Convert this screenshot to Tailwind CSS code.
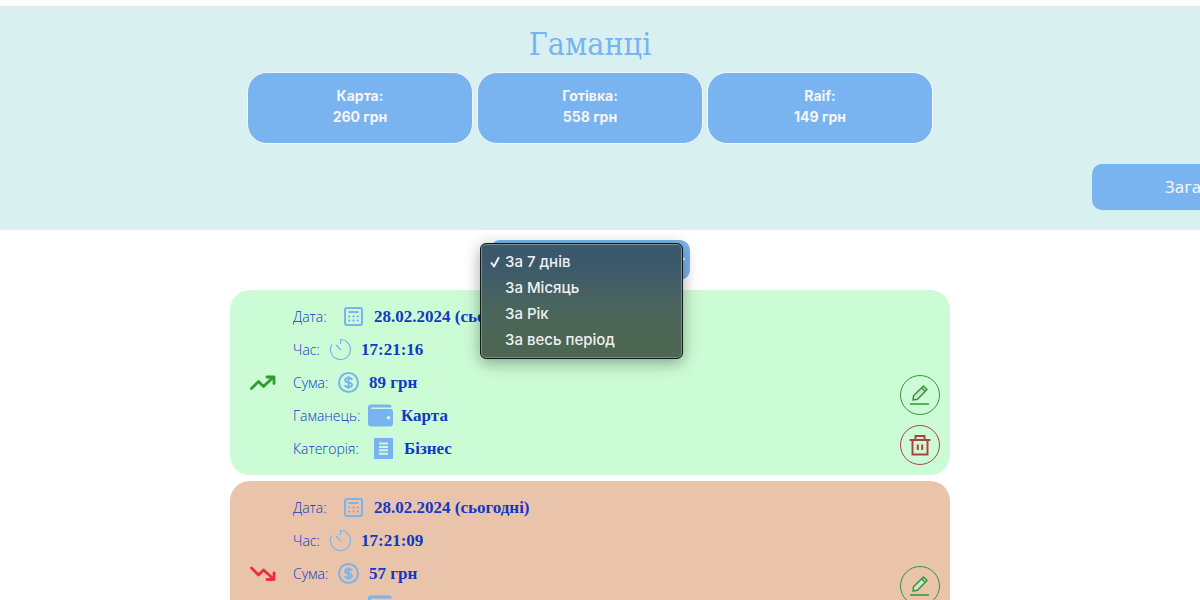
<!DOCTYPE html>
<html lang="uk">
<head>
<meta charset="utf-8">
<meta name="viewport" content="width=device-width, initial-scale=1">
<title>Гаманці</title>
<script src="https://cdn.jsdelivr.net/npm/@tailwindcss/browser@4"></script>
</head>
<body class="bg-white pt-1.5 overflow-x-hidden font-['Inter','Liberation_Sans',sans-serif]">
<svg class="hidden" aria-hidden="true">
  <symbol id="calendar" viewBox="0 0 25 25"><g fill="none" stroke="currentColor" stroke-width="2"><rect x="4" y="4" width="17" height="17" rx="2"/><path d="M7.500 8h10" stroke-width="2"/><path d="M7 12.500h2.400m1.900 0h2.400m1.900 0H18M7 16.500h2.400m1.900 0h2.400m1.900 0H18M8.200 11.300v2.400m4.300-2.400v2.400m4.300-2.400v2.400M8.200 15.300v2.400m4.300-2.400v2.400m4.300-2.400v2.400" stroke-width="1"/></g></symbol>
  <symbol id="timer" viewBox="0 0 25 25"><path fill="none" stroke="currentColor" stroke-width="1.200" d="M12.500 7V2.500A10 10 0 1 1 3.800 7.500M8 8l5 5"/></symbol>
  <symbol id="coin" viewBox="0 0 25 25"><g fill="none" stroke="currentColor" stroke-width="2"><circle cx="12.500" cy="12.500" r="9.500"/><path d="M16 9.800c-.5-1.300-1.800-1.700-3.500-1.700-2 0-3.300.7-3.300 2.100 0 3.300 6.800 1.300 6.800 4.600 0 1.500-1.500 2.200-3.500 2.200-1.900 0-3.200-.7-3.600-2.100M12.500 6.200v12.600"/></g></symbol>
  <symbol id="wallet" viewBox="0 0 25 25"><path fill="currentColor" fill-rule="evenodd" d="M3 1.500h18.500q2 0 2 2v1H4q-1-.2-1 .8T4 6h18q3 0 3 3v11.500q0 3-3 3H3q-3 0-3-3v-16q0-3 3-3ZM20.500 13a1.800 1.800 0 1 0 0 3.600 1.800 1.800 0 0 0 0-3.600Z"/></symbol>
  <symbol id="list" viewBox="0 0 25 25"><path fill="currentColor" fill-rule="evenodd" d="M3 2h19v21H3ZM8 6.500v2h9v-2Zm0 3.400v2h9v-2Zm0 3.400v2h9v-2Zm0 3.400v2h9v-2Z"/></symbol>
  <symbol id="up" viewBox="0 0 26 26"><path fill="none" stroke="currentColor" stroke-width="2.800" stroke-linecap="round" stroke-linejoin="round" d="m1.500 18.500 7-7 5 5L23.500 7M17 7h7v6.500"/></symbol>
  <symbol id="down" viewBox="0 0 26 26"><path fill="none" stroke="currentColor" stroke-width="2.800" stroke-linecap="round" stroke-linejoin="round" d="m1.500 7 7 7 5-5 10 9M17 18.500h7V12"/></symbol>
  <symbol id="edit" viewBox="0 0 24 24"><path fill="#d5e2d8" stroke="currentColor" stroke-width="1.500" stroke-linejoin="round" d="M5.500 12.800 15.500 3 19 6.500 9.500 16.200 5 17Z"/><path stroke="currentColor" stroke-width="1.500" d="M2 21h19M13.800 5l3 3"/></symbol>
  <symbol id="trash" viewBox="0 0 24 24"><path fill="none" stroke="currentColor" stroke-width="2" d="M1.500 7h21M7.500 6V3h9v3M4.500 7v14.500h15V7M9.800 11.500v5.500m4.400-5.500v5.500"/></symbol>
</svg>

<header class="bg-[#d8f0f0] pt-[18px] pb-5 overflow-hidden">
  <div class="pr-5 flex flex-col items-center">
    <h1 class="font-['DejaVu_Serif_Condensed','DejaVu_Serif',serif] text-[32px] leading-[40px] text-[#79b4f0]">Гаманці</h1>
    <div class="flex gap-1 mt-2 text-[14px] leading-[21px] font-bold text-[#f5f5f5]">
      <button class="w-[226px] h-[72px] rounded-[20px] border border-[#f5f5f5] bg-[#79b4f0] pb-1">Карта:<br>260 грн</button>
      <button class="w-[226px] h-[72px] rounded-[20px] border border-[#f5f5f5] bg-[#79b4f0] pb-1">Готівка:<br>558 грн</button>
      <button class="w-[226px] h-[72px] rounded-[20px] border border-[#f5f5f5] bg-[#79b4f0] pb-1">Raif:<br>149 грн</button>
    </div>
  </div>
  <div class="flex justify-end mt-5 -mr-[112px]">
    <button class="w-[220px] h-[46px] shrink-0 rounded-[10px] bg-[#79b4f0] pl-[73px] text-left text-[17px] text-[#f5f5f5] font-['Noto_Sans',sans-serif]">Загальна</button>
  </div>
</header>

<main class="pr-5 pt-[10px] flex flex-col items-center">
  <div class="relative w-[200px]">
    <select aria-label="Період" class="block appearance-none w-full h-10 rounded-[10px] bg-[#79b4f0] text-[#f5f5f5] px-4 text-[16px]"><option>За 7 днів</option><option>За Місяць</option><option>За Рік</option><option>За весь період</option></select>
    <svg class="absolute right-1 top-4 w-3 h-2 text-white pointer-events-none" viewBox="0 0 12 8" fill="none" stroke="currentColor" stroke-width="1.500"><path d="m1 2 5 5 5-5"/></svg>
    <ul role="listbox" aria-label="Період" class="absolute z-10 -left-[10px] top-[3px] w-[203px] h-[116px] rounded-[6px] border border-[#101818] bg-linear-to-b from-[#3b586d] from-15% via-[#4a655d] via-55% to-[#4d6653] to-85% shadow-[inset_0_0_0_1px_#7b8f8b,0_4px_16px_rgba(0,0,0,0.35)] pt-[5px] text-[15px] leading-[26px] font-medium text-[#eef1f0]">
      <li role="option" aria-selected="true" class="flex items-center"><svg class="w-[10px] h-[12px] ml-[9px] mr-[5px]" viewBox="0 0 10 12" fill="none" stroke="currentColor" stroke-width="2" stroke-linecap="round" stroke-linejoin="round"><path d="m1.500 7 2.500 3.500L8.500 2"/></svg>За 7 днів</li>
      <li role="option" aria-selected="false" class="pl-6">За Місяць</li>
      <li role="option" aria-selected="false" class="pl-6">За Рік</li>
      <li role="option" aria-selected="false" class="pl-6">За весь період</li>
    </ul>
  </div>

  <div class="w-full max-w-[720px] mt-[10px] flex flex-col gap-1.5 text-[#1039c4]">
    <article class="flex rounded-[20px] bg-[#ccfcd5] p-[10px]">
      <svg class="w-[26px] h-[26px] ml-[10px] mr-[17px] self-center text-[#339933]"><use href="#up"/></svg>
      <dl class="flex-1 text-[14px] font-['Open_Sans',sans-serif]">
        <div class="flex items-center h-[33px]"><dt class="w-12 font-light whitespace-nowrap">Дата:</dt><svg class="w-[25px] h-[25px] mr-2 text-[#79b4f0]"><use href="#calendar"/></svg><dd class="font-['Liberation_Serif',serif] font-bold text-[17px]">28.02.2024 (сьогодні)</dd></div>
        <div class="flex items-center h-[33px]"><dt class="w-[35px] font-light whitespace-nowrap">Час:</dt><svg class="w-[25px] h-[25px] mr-2 text-[#79b4f0]"><use href="#timer"/></svg><dd class="font-['Liberation_Serif',serif] font-bold text-[17px]">17:21:16</dd></div>
        <div class="flex items-center h-[33px]"><dt class="w-[43px] font-light whitespace-nowrap">Сума:</dt><svg class="w-[25px] h-[25px] mr-2 text-[#79b4f0]"><use href="#coin"/></svg><dd class="font-['Liberation_Serif',serif] font-bold text-[17px]">89 грн</dd></div>
        <div class="flex items-center h-[33px]"><dt class="w-[75px] font-light whitespace-nowrap">Гаманець:</dt><svg class="w-[25px] h-[25px] mr-2 text-[#79b4f0]"><use href="#wallet"/></svg><dd class="font-['Liberation_Serif',serif] font-bold text-[17px]">Карта</dd></div>
        <div class="flex items-center h-[33px]"><dt class="w-[78px] font-light whitespace-nowrap">Категорія:</dt><svg class="w-[25px] h-[25px] mr-2 text-[#79b4f0]"><use href="#list"/></svg><dd class="font-['Liberation_Serif',serif] font-bold text-[17px]">Бізнес</dd></div>
      </dl>
      <div class="flex flex-col justify-end gap-[10px]">
        <button aria-label="Редагувати" class="w-10 h-10 rounded-full border border-[#339933] text-[#339933] flex items-center justify-center"><svg class="w-6 h-6"><use href="#edit"/></svg></button>
        <button aria-label="Видалити" class="w-10 h-10 rounded-full border border-[#a94442] text-[#a94442] flex items-center justify-center"><svg class="w-6 h-6"><use href="#trash"/></svg></button>
      </div>
    </article>

    <article class="flex rounded-[20px] bg-[#e9c3aa] p-[10px]">
      <svg class="w-[26px] h-[26px] ml-[10px] mr-[17px] self-center text-[#f02d3a]"><use href="#down"/></svg>
      <dl class="flex-1 text-[14px] font-['Open_Sans',sans-serif]">
        <div class="flex items-center h-[33px]"><dt class="w-12 font-light whitespace-nowrap">Дата:</dt><svg class="w-[25px] h-[25px] mr-2 text-[#79b4f0]"><use href="#calendar"/></svg><dd class="font-['Liberation_Serif',serif] font-bold text-[17px]">28.02.2024 (сьогодні)</dd></div>
        <div class="flex items-center h-[33px]"><dt class="w-[35px] font-light whitespace-nowrap">Час:</dt><svg class="w-[25px] h-[25px] mr-2 text-[#79b4f0]"><use href="#timer"/></svg><dd class="font-['Liberation_Serif',serif] font-bold text-[17px]">17:21:09</dd></div>
        <div class="flex items-center h-[33px]"><dt class="w-[43px] font-light whitespace-nowrap">Сума:</dt><svg class="w-[25px] h-[25px] mr-2 text-[#79b4f0]"><use href="#coin"/></svg><dd class="font-['Liberation_Serif',serif] font-bold text-[17px]">57 грн</dd></div>
        <div class="flex items-center h-[33px]"><dt class="w-[75px] font-light whitespace-nowrap">Гаманець:</dt><svg class="w-[25px] h-[25px] mr-2 text-[#79b4f0]"><use href="#wallet"/></svg><dd class="font-['Liberation_Serif',serif] font-bold text-[17px]">Карта</dd></div>
        <div class="flex items-center h-[33px]"><dt class="w-[78px] font-light whitespace-nowrap">Категорія:</dt><svg class="w-[25px] h-[25px] mr-2 text-[#79b4f0]"><use href="#list"/></svg><dd class="font-['Liberation_Serif',serif] font-bold text-[17px]">Бізнес</dd></div>
      </dl>
      <div class="flex flex-col justify-end gap-[10px]">
        <button aria-label="Редагувати" class="w-10 h-10 rounded-full border border-[#339933] text-[#339933] flex items-center justify-center"><svg class="w-6 h-6"><use href="#edit"/></svg></button>
        <button aria-label="Видалити" class="w-10 h-10 rounded-full border border-[#a94442] text-[#a94442] flex items-center justify-center"><svg class="w-6 h-6"><use href="#trash"/></svg></button>
      </div>
    </article>
  </div>
</main>
</body>
</html>
